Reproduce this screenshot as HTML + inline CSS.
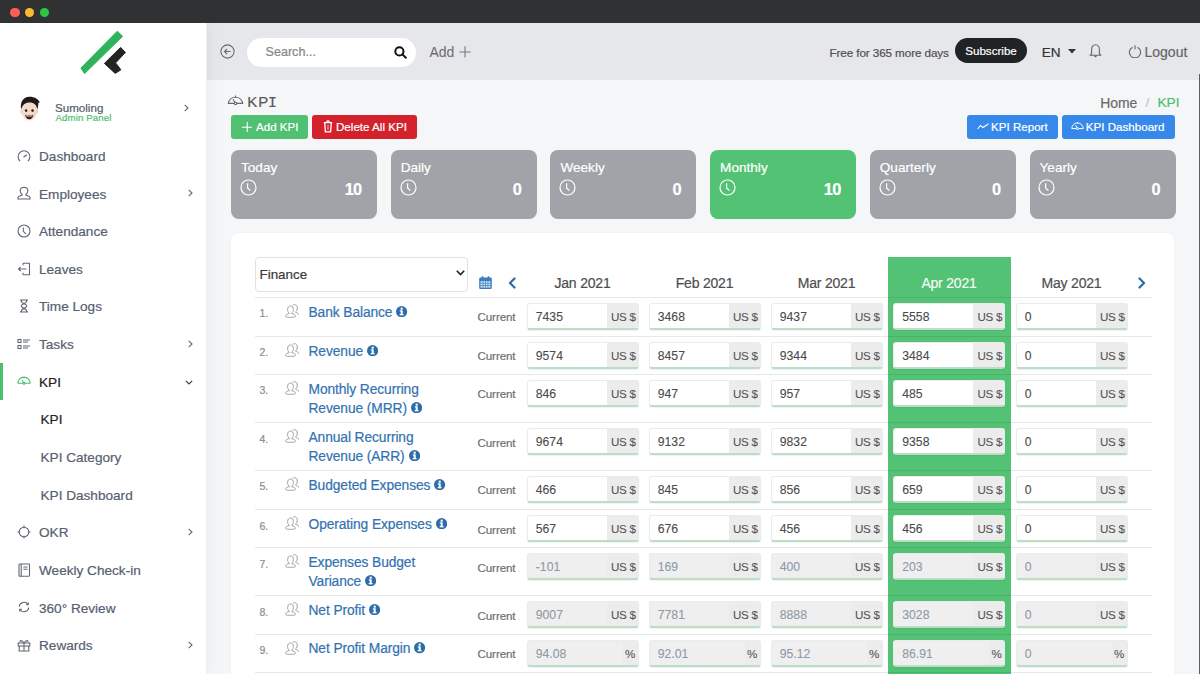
<!DOCTYPE html>
<html><head><meta charset="utf-8">
<style>
*{box-sizing:border-box;margin:0;padding:0}
html,body{width:1200px;height:674px;overflow:hidden;background:#f5f6f8;font-family:"Liberation Sans",sans-serif;position:relative}
body div,body span{-webkit-text-stroke:0.2px currentColor}
.abs{position:absolute}
.ic{position:absolute;display:block}
#titlebar{position:absolute;left:0;top:0;width:1200px;height:23.4px;background:#303133;z-index:5}
.dot{position:absolute;top:7.7px;width:9.6px;height:9.6px;border-radius:50%}
#sidebar{position:absolute;left:0;top:23px;width:207px;height:651px;background:#fff;border-right:1px solid #eceef0;box-shadow:1px 0 14px rgba(40,50,70,.06);z-index:2}
#topbar{position:absolute;left:207px;top:23px;width:993px;height:57.3px;background:#e5e7ea}
.menu{position:absolute;left:39px;margin-top:1.3px;font-size:13.6px;color:#535b69;white-space:nowrap;line-height:16px}
.chev{position:absolute;left:188px}
.num{position:absolute;left:259.5px;font-size:10.5px;color:#8c8c8c;line-height:10px;margin-top:1px}
.kname{position:absolute;left:308.5px;font-size:13.8px;color:#3372b1;line-height:19px;white-space:nowrap;letter-spacing:-0.1px}
.cur{position:absolute;left:477.5px;margin-top:1.2px;font-size:11.6px;color:#6f6f6f;line-height:14px;letter-spacing:-0.1px}
.inp{position:absolute;width:112.4px;height:27.3px;background:#fff;border:1px solid #e9ecea;border-bottom:2px solid #bcdec6;border-radius:3px;box-shadow:0 1px 1px rgba(0,0,0,.06);overflow:hidden}
.inp .val{position:absolute;left:8.3px;top:6px;font-size:12.2px;color:#4a4a4a;line-height:14px;-webkit-text-stroke:0.1px currentColor}
.inp .addon{position:absolute;right:0;top:0;width:31px;height:100%;background:#ececec;font-size:11.6px;color:#555;line-height:14px;padding-top:6.3px;padding-right:2.3px;text-align:right;letter-spacing:-0.3px;-webkit-text-stroke:0.1px currentColor}
.inp .addon.pct{width:15px;padding-right:3px}
.inp.dis{background:#efefef}
.inp.dis .val{color:#8e9aa6}
.hr{position:absolute;left:255px;width:897px;height:1px;background:rgba(20,40,30,.1)}
.card{position:absolute;top:149.5px;width:146px;height:69.2px;border-radius:8px;background:#a0a3a7;color:#fff}
.card .t{position:absolute;left:10px;top:10.8px;font-size:13.6px;line-height:16px}
.card .n{position:absolute;right:15.6px;top:30px;font-size:16.4px;letter-spacing:-0.8px;font-weight:bold;line-height:18px}
.card svg{position:absolute;left:8.9px;top:29.4px}
.mon{position:absolute;top:274.8px;width:112px;text-align:center;font-size:14px;color:#4e4e4e;line-height:16px;letter-spacing:-0.2px}
.btn{position:absolute;top:114.7px;height:24.8px;border-radius:3px;color:#fff;font-size:11.6px;line-height:24.8px;white-space:nowrap}
</style></head><body>
<div id="titlebar">
  <div class="dot" style="left:9.95px;background:#fd5e57"></div>
  <div class="dot" style="left:24.7px;background:#fdbb2f"></div>
  <div class="dot" style="left:39.5px;background:#2bc742"></div>
</div>

<div id="sidebar">
  <!-- logo -->
  <svg class="ic" style="left:70px;top:2px" width="60" height="55" viewBox="0 0 60 55">
    <path d="M47.3 6.2 L52.6 11.3 L14.6 48.6 L10.9 43.1Z" fill="#2fb35a" stroke="#2fb35a" stroke-width="1" stroke-linejoin="round"/>
    <path d="M34.4 38.4 L50.6 22.4 L55.4 27.4 L45.6 37.9 L50.9 44.8 L45.2 48.4Z" fill="#232425" stroke="#232425" stroke-width="1" stroke-linejoin="round"/>
  </svg>
  <!-- avatar -->
  <svg class="ic" style="left:19px;top:73px" width="22" height="26" viewBox="0 0 22 26">
    <ellipse cx="3" cy="15.5" rx="1.6" ry="2.2" fill="#eecbb3"/><ellipse cx="17.6" cy="15.5" rx="1.6" ry="2.2" fill="#eecbb3"/>
    <ellipse cx="10.3" cy="15" rx="7.6" ry="9.4" fill="#f4dac8"/>
    <path d="M2.2 13.5 C0.8 6.5 4 0.8 10.5 0.8 C15.5 0.8 19 3 20.8 6.2 L19.3 7 C19.4 9.5 18.9 11.5 18.3 13.5 C17.5 9 15 6.5 10.5 6.5 C6 6.5 3.5 9 2.2 13.5Z" fill="#1f1a17"/>
    <ellipse cx="7.1" cy="14.6" rx="1.25" ry="1.4" fill="#2a1d1a"/><ellipse cx="13.5" cy="14.6" rx="1.25" ry="1.4" fill="#2a1d1a"/>
    <path d="M6.2 18.8 Q10.3 19.6 14.4 18.8 Q13.8 23.2 10.3 23.2 Q6.8 23.2 6.2 18.8Z" fill="#3a1c18"/><path d="M7 19.3 Q10.3 20 13.6 19.3 L13.4 20.2 Q10.3 20.8 7.2 20.2Z" fill="#fff"/>
  </svg>
  <div class="abs" style="left:55px;top:77.5px;font-size:11.6px;color:#535b69;line-height:14px">Sumoling</div>
  <div class="abs" style="left:55.5px;top:89px;font-size:9.6px;color:#4cbf6e;line-height:11px;letter-spacing:0.15px">Admin Panel</div>
  <svg class="chev" style="left:184px;top:81.3px" width="5" height="8" viewBox="0 0 5 8"><path d="M0.7 0.8 L4 4 L0.7 7.2" stroke="#666" stroke-width="1.1" fill="none"/></svg>

  <div class="menu" style="top:124.7px;color:#566070">Dashboard</div>
<svg class="ic" style="left:16.5px;top:125.7px" width="14" height="14" viewBox="0 0 14 14" fill="none" stroke="#606875" stroke-width="1.1"><path d="M3.2 12.2A5.9 5.9 0 1 1 10.8 12.2"/><path d="M7 7.8L9.3 6.2" stroke-width="1.4" stroke-linecap="round"/></svg>
<div class="menu" style="top:162.3px;color:#566070">Employees</div>
<svg class="ic" style="left:16.5px;top:163.3px" width="14" height="14" viewBox="0 0 14 14" fill="none" stroke="#606875" stroke-width="1.1"><path d="M5 8.3C3.7 7.6 3.2 6.2 3.2 4.8 3.2 2.7 4.8 1.2 7 1.2S10.8 2.7 10.8 4.8C10.8 6.2 10.3 7.6 9 8.3V9.2C11.5 9.7 13 10.5 13 11.8V13H1V11.8C1 10.5 2.5 9.7 5 9.2Z"/></svg>
<svg class="chev" style="top:166.4px" width="5" height="8" viewBox="0 0 5 8"><path d="M0.7 0.8 L4 4 L0.7 7.2" stroke="#666" stroke-width="1.1" fill="none"/></svg>
<div class="menu" style="top:200.0px;color:#566070">Attendance</div>
<svg class="ic" style="left:16.5px;top:201.0px" width="14" height="14" viewBox="0 0 14 14" fill="none" stroke="#606875" stroke-width="1.1"><circle cx="7" cy="7" r="6"/><path d="M6.3 3.5V7.3L9 9.8"/></svg>
<div class="menu" style="top:237.6px;color:#566070">Leaves</div>
<svg class="ic" style="left:16.5px;top:238.6px" width="14" height="14" viewBox="0 0 14 14" fill="none" stroke="#606875" stroke-width="1.1"><path d="M6 1.2H12.5V12.8H6M6 1.2V3.2M6 12.8V10.8M9.5 7H1.5M3.7 4.8L1.5 7L3.7 9.2"/></svg>
<div class="menu" style="top:275.2px;color:#566070">Time Logs</div>
<svg class="ic" style="left:16.5px;top:276.2px" width="14" height="14" viewBox="0 0 14 14" fill="none" stroke="#606875" stroke-width="1.1"><path d="M3 1H11M3 13H11M4 1C4 5 9.8 5 9.8 7S4 9 4 13M10 1C10 5 4.2 5 4.2 7S10 9 10 13"/></svg>
<div class="menu" style="top:312.9px;color:#566070">Tasks</div>
<svg class="ic" style="left:16.5px;top:313.9px" width="14" height="14" viewBox="0 0 14 14" fill="none" stroke="#606875" stroke-width="1.1"><rect x="1" y="2.5" width="3" height="3"/><rect x="1" y="8.5" width="3" height="3"/><path d="M6 3H13M6 5H11M6 9H13M6 11H11"/></svg>
<svg class="chev" style="top:317.0px" width="5" height="8" viewBox="0 0 5 8"><path d="M0.7 0.8 L4 4 L0.7 7.2" stroke="#666" stroke-width="1.1" fill="none"/></svg>
<div class="menu" style="top:350.5px;color:#1f2429">KPI</div>
<svg class="ic" style="left:16.5px;top:351.5px" width="14" height="14" viewBox="0 0 14 14" fill="none" stroke="#4cbf6e" stroke-width="1.1"><path d="M0.9 8.2A6.1 6.1 0 0 1 13.1 8.2Z" stroke-linejoin="round"/><path d="M7 2.3V3.4M6.7 7.7L5.1 5"/><circle cx="7" cy="8.3" r="1" fill="#fff"/></svg>
<svg class="chev" style="left:184.5px;top:356.6px" width="8" height="5" viewBox="0 0 8 5"><path d="M0.8 0.8 L4 4 L7.2 0.8" stroke="#444" stroke-width="1.2" fill="none"/></svg>
<div class="menu" style="left:40.5px;top:388.1px;color:#1f2429">KPI</div>
<div class="menu" style="left:40.5px;top:425.7px;color:#566070">KPI Category</div>
<div class="menu" style="left:40.5px;top:463.4px;color:#566070">KPI Dashboard</div>
<div class="menu" style="top:501.0px;color:#566070">OKR</div>
<svg class="ic" style="left:16.5px;top:502.0px" width="14" height="14" viewBox="0 0 14 14" fill="none" stroke="#606875" stroke-width="1.1"><circle cx="7" cy="7" r="4.8"/><path d="M7 0.5V3.2M7 10.8V13.5M0.5 7H3.2M10.8 7H13.5"/></svg>
<svg class="chev" style="top:505.1px" width="5" height="8" viewBox="0 0 5 8"><path d="M0.7 0.8 L4 4 L0.7 7.2" stroke="#666" stroke-width="1.1" fill="none"/></svg>
<div class="menu" style="top:538.6px;color:#566070">Weekly Check-in</div>
<svg class="ic" style="left:16.5px;top:539.6px" width="14" height="14" viewBox="0 0 14 14" fill="none" stroke="#606875" stroke-width="1.1"><rect x="2" y="1" width="10.5" height="12.2" rx="0.8"/><path d="M4.2 1V13.2M6.3 4H10.5M6.3 6.2H10.5"/></svg>
<div class="menu" style="top:576.3px;color:#566070">360° Review</div>
<svg class="ic" style="left:16.5px;top:577.3px" width="14" height="14" viewBox="0 0 14 14" fill="none" stroke="#606875" stroke-width="1.1"><path d="M2.2 6.5A4.8 4.8 0 0 1 11 4.5M11.8 7.5A4.8 4.8 0 0 1 3 9.5M9.3 4.6H11.3V2.6M4.7 9.4H2.7V11.4"/></svg>
<div class="menu" style="top:613.9px;color:#566070">Rewards</div>
<svg class="ic" style="left:16.5px;top:614.9px" width="14" height="14" viewBox="0 0 14 14" fill="none" stroke="#606875" stroke-width="1.1"><rect x="1.2" y="5" width="11.6" height="3"/><path d="M2.2 8V13H11.8V8M7 5V13M7 5C5 2 2.5 2 3.2 4.2M7 5C9 2 11.5 2 10.8 4.2"/></svg>
<svg class="chev" style="top:618.0px" width="5" height="8" viewBox="0 0 5 8"><path d="M0.7 0.8 L4 4 L0.7 7.2" stroke="#666" stroke-width="1.1" fill="none"/></svg>
<div class="abs" style="left:0;top:340.3px;width:3px;height:36.3px;background:#4cbf6e"></div>
</div>

<div id="topbar">
  <svg class="ic" style="left:12.5px;top:21px" width="15" height="15" viewBox="0 0 15 15" fill="none" stroke="#6a6a6a" stroke-width="1.1"><circle cx="7.5" cy="7.5" r="6.6"/><path d="M10.5 7.5H4.5M7 5L4.5 7.5L7 10"/></svg>
  <div class="abs" style="left:40px;top:15px;width:169px;height:29px;border-radius:15px;background:#fff"></div>
  <div class="abs" style="left:58.5px;top:22px;font-size:12.6px;color:#858585;line-height:15px">Search...</div>
  <svg class="ic" style="left:187px;top:22.8px" width="13" height="13" viewBox="0 0 13 13" fill="none" stroke="#111" stroke-width="2"><circle cx="5.4" cy="5.4" r="4.1"/><path d="M8.4 8.4L11.8 11.8" stroke-linecap="round"/></svg>
  <div class="abs" style="left:222.5px;top:21px;font-size:14px;color:#6e6e6e;line-height:16px;-webkit-text-stroke:0.05px currentColor">Add</div>
  <svg class="ic" style="left:252px;top:22.5px" width="12" height="12" viewBox="0 0 12 12" stroke="#7a7a7a" stroke-width="1.1"><path d="M6 0.3V11.5M0.3 6H11.7"/></svg>

  <div class="abs" style="left:622.5px;top:23px;font-size:11.7px;color:#4f4f4f;line-height:14px;letter-spacing:-0.1px">Free for 365 more days</div>
  <div class="abs" style="left:748px;top:15px;width:72px;height:25px;border-radius:13px;background:#1f2326;color:#fff;font-size:11.6px;line-height:26px;text-align:center">Subscribe</div>
  <div class="abs" style="left:834.8px;top:22.3px;font-size:13.6px;color:#333;line-height:16px">EN</div>
  <svg class="ic" style="left:861.3px;top:25.8px" width="8" height="5" viewBox="0 0 8 5"><path d="M0 0H8L4 4.5Z" fill="#333"/></svg>
  <svg class="ic" style="left:882px;top:20px" width="13" height="15" viewBox="0 0 13 15" fill="none" stroke="#666" stroke-width="1.1"><path d="M2.6 10.6V6.3C2.6 3.9 4.2 1.8 6.5 1.8S10.4 3.9 10.4 6.3V10.6L11.9 12.2H1.1Z" stroke-linejoin="round"/><path d="M5.3 12.6L6.5 13.8 7.7 12.6"/></svg>
  <svg class="ic" style="left:920.6px;top:21px" width="14" height="14" viewBox="0 0 14 14" fill="none" stroke="#666" stroke-width="1.1"><path d="M4.6 3.2A5.6 5.6 0 1 0 9.4 3.2"/><path d="M7 1.2V5.2"/></svg>
  <div class="abs" style="left:937.5px;top:21px;font-size:14px;color:#666;line-height:16px">Logout</div>
</div>

<!-- page header -->
<svg class="ic" style="left:227px;top:94px" width="17" height="12" viewBox="0 0 17 12" fill="none" stroke="#6a6a6a" stroke-width="1.1"><path d="M1.3 9.4A7.3 7.3 0 0 1 15.7 9.4Z" stroke-linejoin="round"/><path d="M8.5 1.6V3.4M8.1 8.6L6 5.2"/><circle cx="8.5" cy="9.4" r="1.2" fill="#f5f6f8"/></svg>
<div class="abs" style="left:247.3px;top:92.8px;font-size:15px;color:#585858;line-height:17px;letter-spacing:0.9px">KP<span style="font-family:'Liberation Mono',monospace;font-size:15px;margin-left:-1.2px">I</span></div>

<div class="btn" style="left:231px;width:77px;background:#50c072"><svg class="ic" style="left:10.5px;top:7px" width="10.5" height="10.5" viewBox="0 0 10.5 10.5" stroke="#fff" stroke-width="1.1"><path d="M5.25 0V10.5M0 5.25H10.5"/></svg><span class="abs" style="left:25px;top:0">Add KPI</span></div>
<div class="btn" style="left:312px;width:105px;background:#d3222c"><svg class="ic" style="left:10.6px;top:5.6px" width="10" height="13" viewBox="0 0 10 13" fill="none" stroke="#fff" stroke-width="1.3" stroke-linejoin="round"><path d="M0.8 2.6H9.2M3.6 2.4L4.3 1H5.7L6.4 2.4M1.7 2.6L2.4 11.9H7.6L8.3 2.6"/><path d="M5 5V10" stroke-width=".7"/></svg><span class="abs" style="left:24px;top:0">Delete All KPI</span></div>

<div class="abs" style="left:1100.3px;top:95px;font-size:13.9px;color:#6a6a6a;line-height:16px">Home</div>
<div class="abs" style="left:1145.5px;top:95px;font-size:13.6px;color:#c6c6c6;line-height:16px">/</div>
<div class="abs" style="left:1157.5px;top:95px;font-size:13.6px;color:#4cbf6e;line-height:16px">KPI</div>

<div class="btn" style="left:967px;width:91px;background:#3788eb"><svg class="ic" style="left:10px;top:8.5px" width="12" height="7" viewBox="0 0 12 7" fill="none" stroke="#fff" stroke-width="1.1"><path d="M0.5 6L3.5 2.5L6 4.5L11.5 0.8"/></svg><span class="abs" style="left:24px;top:0">KPI Report</span></div>
<div class="btn" style="left:1061.8px;width:113.5px;background:#3788eb"><svg class="ic" style="left:9.5px;top:6.8px" width="13" height="9" viewBox="0 0 13 9" fill="none" stroke="#fff" stroke-width="1"><path d="M0.8 7.6A5.7 5.7 0 0 1 12.2 7.6Z" stroke-linejoin="round"/><path d="M6.5 1.6V2.8M6.2 7L4.6 4.2"/><circle cx="6.5" cy="7.6" r="1" fill="#3788eb"/></svg><span class="abs" style="left:24px;top:0">KPI Dashboard</span></div>

<!-- cards -->
<div class="card" style="left:231.0px;background:#a0a3a7"><div class="t">Today</div><svg width="17" height="17" viewBox="0 0 17 17" fill="none" stroke="#fff" stroke-width="1.2"><circle cx="8.5" cy="8.5" r="7.5"/><path d="M7.6 4.2V8.9L10.4 11.6"/></svg><div class="n">10</div></div>
<div class="card" style="left:390.7px;background:#a0a3a7"><div class="t">Daily</div><svg width="17" height="17" viewBox="0 0 17 17" fill="none" stroke="#fff" stroke-width="1.2"><circle cx="8.5" cy="8.5" r="7.5"/><path d="M7.6 4.2V8.9L10.4 11.6"/></svg><div class="n">0</div></div>
<div class="card" style="left:550.4px;background:#a0a3a7"><div class="t">Weekly</div><svg width="17" height="17" viewBox="0 0 17 17" fill="none" stroke="#fff" stroke-width="1.2"><circle cx="8.5" cy="8.5" r="7.5"/><path d="M7.6 4.2V8.9L10.4 11.6"/></svg><div class="n">0</div></div>
<div class="card" style="left:710.1px;background:#53c274"><div class="t">Monthly</div><svg width="17" height="17" viewBox="0 0 17 17" fill="none" stroke="#fff" stroke-width="1.2"><circle cx="8.5" cy="8.5" r="7.5"/><path d="M7.6 4.2V8.9L10.4 11.6"/></svg><div class="n">10</div></div>
<div class="card" style="left:869.8px;background:#a0a3a7"><div class="t">Quarterly</div><svg width="17" height="17" viewBox="0 0 17 17" fill="none" stroke="#fff" stroke-width="1.2"><circle cx="8.5" cy="8.5" r="7.5"/><path d="M7.6 4.2V8.9L10.4 11.6"/></svg><div class="n">0</div></div>
<div class="card" style="left:1029.5px;background:#a0a3a7"><div class="t">Yearly</div><svg width="17" height="17" viewBox="0 0 17 17" fill="none" stroke="#fff" stroke-width="1.2"><circle cx="8.5" cy="8.5" r="7.5"/><path d="M7.6 4.2V8.9L10.4 11.6"/></svg><div class="n">0</div></div>

<!-- table card -->
<div class="abs" style="left:230.5px;top:232.8px;width:943.5px;height:460px;background:#fff;border-radius:8px;box-shadow:0 -1px 2px rgba(0,0,0,.02)"></div>
<div class="abs" style="left:888px;top:256.6px;width:122.5px;height:420px;background:#53c274"></div>
<div class="abs" style="left:255px;top:257px;width:213px;height:35px;border:1px solid #e2e2e2;border-radius:4px;background:#fff"></div>
<div class="abs" style="left:259.5px;top:267px;font-size:13.4px;color:#3a3a3a;line-height:16px">Finance</div>
<svg class="ic" style="left:455.5px;top:270px" width="9" height="6" viewBox="0 0 9 6" fill="none" stroke="#222" stroke-width="1.6"><path d="M0.8 0.8L4.5 4.6L8.2 0.8"/></svg>
<svg class="ic" style="left:479.2px;top:276.3px" width="13" height="13.2" viewBox="0 0 13 13.2"><rect x="0.2" y="1.6" width="12.6" height="11.4" rx="1.2" fill="#3a7dc0"/><path d="M1.6 5.2H11.4V11.6H1.6Z" fill="#dbe8f5"/><path d="M1.6 7.3H11.4M1.6 9.5H11.4M4.05 5.2V11.6M6.5 5.2V11.6M8.95 5.2V11.6" stroke="#3a7dc0" stroke-width=".75"/><rect x="2.6" y="0.2" width="1.8" height="2.6" rx=".6" fill="#3a7dc0"/><rect x="8.6" y="0.2" width="1.8" height="2.6" rx=".6" fill="#3a7dc0"/></svg>
<svg class="ic" style="left:507.5px;top:276.5px" width="8" height="12" viewBox="0 0 8 12" fill="none" stroke="#2f6dab" stroke-width="2.3" stroke-linecap="round" stroke-linejoin="round"><path d="M6.5 1.5L2 6L6.5 10.5"/></svg>
<svg class="ic" style="left:1138px;top:277px" width="8" height="12" viewBox="0 0 8 12" fill="none" stroke="#2f6dab" stroke-width="2.3" stroke-linecap="round" stroke-linejoin="round"><path d="M1.5 1.5L6 6L1.5 10.5"/></svg>
<div class="mon" style="left:526.5px">Jan 2021</div>
<div class="mon" style="left:648.5px">Feb 2021</div>
<div class="mon" style="left:770.5px">Mar 2021</div>
<div class="mon" style="left:893px;color:#f2fbf4">Apr 2021</div>
<div class="mon" style="left:1015.5px">May 2021</div>

<div class="num" style="top:307.3px">1.</div>
<svg class="ic" style="left:285px;top:304.2px" width="14" height="14" viewBox="0 0 14 14" fill="none" stroke="#a0a0a0" stroke-width="1"><path d="M4.3 9.2C2.8 8.3 2.6 6.8 2.6 5.4 2.6 3.4 3.8 2 5.5 2S8.4 3.4 8.4 5.4C8.4 6.8 8.2 8.3 6.7 9.2V9.6C9 10 10.5 11 10.5 12.2 10.5 13 9.5 13.3 5.5 13.3S0.5 13 0.5 12.2C0.5 11 2 10 4.3 9.6Z"/><path d="M7.7 1.7C8.1 1.1 8.7 0.7 9.6 0.7 11.2 0.7 12.3 2 12.3 4 12.3 5.4 12 6.9 10.6 7.8V8.2C12.4 8.6 13.5 9.5 13.5 10.6"/></svg>
<div class="kname" style="top:302.8px">Bank Balance<svg style="display:inline-block;vertical-align:-0.4px;margin-left:4px" width="11.2" height="11.4" viewBox="0 0 11 11.2"><circle cx="5.5" cy="5.6" r="5.5" fill="#2c6cab"/><rect x="4.6" y="4.3" width="2" height="4.4" fill="#fff"/><rect x="3.6" y="7.9" width="3.8" height="1.3" fill="#fff"/><rect x="3.7" y="4.3" width="2" height="1.1" fill="#fff"/><circle cx="5.6" cy="2.6" r="1.15" fill="#fff"/></svg></div>
<div class="cur" style="top:309.3px">Current</div>
<div class="inp" style="left:526.5px;top:303.0px"><span class="val">7435</span><span class="addon">US $</span></div>
<div class="inp" style="left:648.5px;top:303.0px"><span class="val">3468</span><span class="addon">US $</span></div>
<div class="inp" style="left:770.5px;top:303.0px"><span class="val">9437</span><span class="addon">US $</span></div>
<div class="inp" style="left:893px;top:303.0px"><span class="val">5558</span><span class="addon">US $</span></div>
<div class="inp" style="left:1015.5px;top:303.0px"><span class="val">0</span><span class="addon">US $</span></div>
<div class="num" style="top:346px">2.</div>
<svg class="ic" style="left:285px;top:342.9px" width="14" height="14" viewBox="0 0 14 14" fill="none" stroke="#a0a0a0" stroke-width="1"><path d="M4.3 9.2C2.8 8.3 2.6 6.8 2.6 5.4 2.6 3.4 3.8 2 5.5 2S8.4 3.4 8.4 5.4C8.4 6.8 8.2 8.3 6.7 9.2V9.6C9 10 10.5 11 10.5 12.2 10.5 13 9.5 13.3 5.5 13.3S0.5 13 0.5 12.2C0.5 11 2 10 4.3 9.6Z"/><path d="M7.7 1.7C8.1 1.1 8.7 0.7 9.6 0.7 11.2 0.7 12.3 2 12.3 4 12.3 5.4 12 6.9 10.6 7.8V8.2C12.4 8.6 13.5 9.5 13.5 10.6"/></svg>
<div class="kname" style="top:341.5px">Revenue<svg style="display:inline-block;vertical-align:-0.4px;margin-left:4px" width="11.2" height="11.4" viewBox="0 0 11 11.2"><circle cx="5.5" cy="5.6" r="5.5" fill="#2c6cab"/><rect x="4.6" y="4.3" width="2" height="4.4" fill="#fff"/><rect x="3.6" y="7.9" width="3.8" height="1.3" fill="#fff"/><rect x="3.7" y="4.3" width="2" height="1.1" fill="#fff"/><circle cx="5.6" cy="2.6" r="1.15" fill="#fff"/></svg></div>
<div class="cur" style="top:348px">Current</div>
<div class="inp" style="left:526.5px;top:341.7px"><span class="val">9574</span><span class="addon">US $</span></div>
<div class="inp" style="left:648.5px;top:341.7px"><span class="val">8457</span><span class="addon">US $</span></div>
<div class="inp" style="left:770.5px;top:341.7px"><span class="val">9344</span><span class="addon">US $</span></div>
<div class="inp" style="left:893px;top:341.7px"><span class="val">3484</span><span class="addon">US $</span></div>
<div class="inp" style="left:1015.5px;top:341.7px"><span class="val">0</span><span class="addon">US $</span></div>
<div class="num" style="top:384.2px">3.</div>
<svg class="ic" style="left:285px;top:381.09999999999997px" width="14" height="14" viewBox="0 0 14 14" fill="none" stroke="#a0a0a0" stroke-width="1"><path d="M4.3 9.2C2.8 8.3 2.6 6.8 2.6 5.4 2.6 3.4 3.8 2 5.5 2S8.4 3.4 8.4 5.4C8.4 6.8 8.2 8.3 6.7 9.2V9.6C9 10 10.5 11 10.5 12.2 10.5 13 9.5 13.3 5.5 13.3S0.5 13 0.5 12.2C0.5 11 2 10 4.3 9.6Z"/><path d="M7.7 1.7C8.1 1.1 8.7 0.7 9.6 0.7 11.2 0.7 12.3 2 12.3 4 12.3 5.4 12 6.9 10.6 7.8V8.2C12.4 8.6 13.5 9.5 13.5 10.6"/></svg>
<div class="kname" style="top:379.7px">Monthly Recurring</div>
<div class="kname" style="top:398.7px">Revenue (MRR)<svg style="display:inline-block;vertical-align:-0.4px;margin-left:4px" width="11.2" height="11.4" viewBox="0 0 11 11.2"><circle cx="5.5" cy="5.6" r="5.5" fill="#2c6cab"/><rect x="4.6" y="4.3" width="2" height="4.4" fill="#fff"/><rect x="3.6" y="7.9" width="3.8" height="1.3" fill="#fff"/><rect x="3.7" y="4.3" width="2" height="1.1" fill="#fff"/><circle cx="5.6" cy="2.6" r="1.15" fill="#fff"/></svg></div>
<div class="cur" style="top:386.2px">Current</div>
<div class="inp" style="left:526.5px;top:379.9px"><span class="val">846</span><span class="addon">US $</span></div>
<div class="inp" style="left:648.5px;top:379.9px"><span class="val">947</span><span class="addon">US $</span></div>
<div class="inp" style="left:770.5px;top:379.9px"><span class="val">957</span><span class="addon">US $</span></div>
<div class="inp" style="left:893px;top:379.9px"><span class="val">485</span><span class="addon">US $</span></div>
<div class="inp" style="left:1015.5px;top:379.9px"><span class="val">0</span><span class="addon">US $</span></div>
<div class="num" style="top:432.5px">4.</div>
<svg class="ic" style="left:285px;top:429.4px" width="14" height="14" viewBox="0 0 14 14" fill="none" stroke="#a0a0a0" stroke-width="1"><path d="M4.3 9.2C2.8 8.3 2.6 6.8 2.6 5.4 2.6 3.4 3.8 2 5.5 2S8.4 3.4 8.4 5.4C8.4 6.8 8.2 8.3 6.7 9.2V9.6C9 10 10.5 11 10.5 12.2 10.5 13 9.5 13.3 5.5 13.3S0.5 13 0.5 12.2C0.5 11 2 10 4.3 9.6Z"/><path d="M7.7 1.7C8.1 1.1 8.7 0.7 9.6 0.7 11.2 0.7 12.3 2 12.3 4 12.3 5.4 12 6.9 10.6 7.8V8.2C12.4 8.6 13.5 9.5 13.5 10.6"/></svg>
<div class="kname" style="top:428.0px">Annual Recurring</div>
<div class="kname" style="top:447.0px">Revenue (ARR)<svg style="display:inline-block;vertical-align:-0.4px;margin-left:4px" width="11.2" height="11.4" viewBox="0 0 11 11.2"><circle cx="5.5" cy="5.6" r="5.5" fill="#2c6cab"/><rect x="4.6" y="4.3" width="2" height="4.4" fill="#fff"/><rect x="3.6" y="7.9" width="3.8" height="1.3" fill="#fff"/><rect x="3.7" y="4.3" width="2" height="1.1" fill="#fff"/><circle cx="5.6" cy="2.6" r="1.15" fill="#fff"/></svg></div>
<div class="cur" style="top:434.5px">Current</div>
<div class="inp" style="left:526.5px;top:428.2px"><span class="val">9674</span><span class="addon">US $</span></div>
<div class="inp" style="left:648.5px;top:428.2px"><span class="val">9132</span><span class="addon">US $</span></div>
<div class="inp" style="left:770.5px;top:428.2px"><span class="val">9832</span><span class="addon">US $</span></div>
<div class="inp" style="left:893px;top:428.2px"><span class="val">9358</span><span class="addon">US $</span></div>
<div class="inp" style="left:1015.5px;top:428.2px"><span class="val">0</span><span class="addon">US $</span></div>
<div class="num" style="top:480.3px">5.</div>
<svg class="ic" style="left:285px;top:477.2px" width="14" height="14" viewBox="0 0 14 14" fill="none" stroke="#a0a0a0" stroke-width="1"><path d="M4.3 9.2C2.8 8.3 2.6 6.8 2.6 5.4 2.6 3.4 3.8 2 5.5 2S8.4 3.4 8.4 5.4C8.4 6.8 8.2 8.3 6.7 9.2V9.6C9 10 10.5 11 10.5 12.2 10.5 13 9.5 13.3 5.5 13.3S0.5 13 0.5 12.2C0.5 11 2 10 4.3 9.6Z"/><path d="M7.7 1.7C8.1 1.1 8.7 0.7 9.6 0.7 11.2 0.7 12.3 2 12.3 4 12.3 5.4 12 6.9 10.6 7.8V8.2C12.4 8.6 13.5 9.5 13.5 10.6"/></svg>
<div class="kname" style="top:475.8px">Budgeted Expenses<svg style="display:inline-block;vertical-align:-0.4px;margin-left:4px" width="11.2" height="11.4" viewBox="0 0 11 11.2"><circle cx="5.5" cy="5.6" r="5.5" fill="#2c6cab"/><rect x="4.6" y="4.3" width="2" height="4.4" fill="#fff"/><rect x="3.6" y="7.9" width="3.8" height="1.3" fill="#fff"/><rect x="3.7" y="4.3" width="2" height="1.1" fill="#fff"/><circle cx="5.6" cy="2.6" r="1.15" fill="#fff"/></svg></div>
<div class="cur" style="top:482.3px">Current</div>
<div class="inp" style="left:526.5px;top:476.0px"><span class="val">466</span><span class="addon">US $</span></div>
<div class="inp" style="left:648.5px;top:476.0px"><span class="val">845</span><span class="addon">US $</span></div>
<div class="inp" style="left:770.5px;top:476.0px"><span class="val">856</span><span class="addon">US $</span></div>
<div class="inp" style="left:893px;top:476.0px"><span class="val">659</span><span class="addon">US $</span></div>
<div class="inp" style="left:1015.5px;top:476.0px"><span class="val">0</span><span class="addon">US $</span></div>
<div class="num" style="top:519.5px">6.</div>
<svg class="ic" style="left:285px;top:516.4px" width="14" height="14" viewBox="0 0 14 14" fill="none" stroke="#a0a0a0" stroke-width="1"><path d="M4.3 9.2C2.8 8.3 2.6 6.8 2.6 5.4 2.6 3.4 3.8 2 5.5 2S8.4 3.4 8.4 5.4C8.4 6.8 8.2 8.3 6.7 9.2V9.6C9 10 10.5 11 10.5 12.2 10.5 13 9.5 13.3 5.5 13.3S0.5 13 0.5 12.2C0.5 11 2 10 4.3 9.6Z"/><path d="M7.7 1.7C8.1 1.1 8.7 0.7 9.6 0.7 11.2 0.7 12.3 2 12.3 4 12.3 5.4 12 6.9 10.6 7.8V8.2C12.4 8.6 13.5 9.5 13.5 10.6"/></svg>
<div class="kname" style="top:515.0px">Operating Expenses<svg style="display:inline-block;vertical-align:-0.4px;margin-left:4px" width="11.2" height="11.4" viewBox="0 0 11 11.2"><circle cx="5.5" cy="5.6" r="5.5" fill="#2c6cab"/><rect x="4.6" y="4.3" width="2" height="4.4" fill="#fff"/><rect x="3.6" y="7.9" width="3.8" height="1.3" fill="#fff"/><rect x="3.7" y="4.3" width="2" height="1.1" fill="#fff"/><circle cx="5.6" cy="2.6" r="1.15" fill="#fff"/></svg></div>
<div class="cur" style="top:521.5px">Current</div>
<div class="inp" style="left:526.5px;top:515.2px"><span class="val">567</span><span class="addon">US $</span></div>
<div class="inp" style="left:648.5px;top:515.2px"><span class="val">676</span><span class="addon">US $</span></div>
<div class="inp" style="left:770.5px;top:515.2px"><span class="val">456</span><span class="addon">US $</span></div>
<div class="inp" style="left:893px;top:515.2px"><span class="val">456</span><span class="addon">US $</span></div>
<div class="inp" style="left:1015.5px;top:515.2px"><span class="val">0</span><span class="addon">US $</span></div>
<div class="num" style="top:557.5px">7.</div>
<svg class="ic" style="left:285px;top:554.4px" width="14" height="14" viewBox="0 0 14 14" fill="none" stroke="#a0a0a0" stroke-width="1"><path d="M4.3 9.2C2.8 8.3 2.6 6.8 2.6 5.4 2.6 3.4 3.8 2 5.5 2S8.4 3.4 8.4 5.4C8.4 6.8 8.2 8.3 6.7 9.2V9.6C9 10 10.5 11 10.5 12.2 10.5 13 9.5 13.3 5.5 13.3S0.5 13 0.5 12.2C0.5 11 2 10 4.3 9.6Z"/><path d="M7.7 1.7C8.1 1.1 8.7 0.7 9.6 0.7 11.2 0.7 12.3 2 12.3 4 12.3 5.4 12 6.9 10.6 7.8V8.2C12.4 8.6 13.5 9.5 13.5 10.6"/></svg>
<div class="kname" style="top:553.0px">Expenses Budget</div>
<div class="kname" style="top:572.0px">Variance<svg style="display:inline-block;vertical-align:-0.4px;margin-left:4px" width="11.2" height="11.4" viewBox="0 0 11 11.2"><circle cx="5.5" cy="5.6" r="5.5" fill="#2c6cab"/><rect x="4.6" y="4.3" width="2" height="4.4" fill="#fff"/><rect x="3.6" y="7.9" width="3.8" height="1.3" fill="#fff"/><rect x="3.7" y="4.3" width="2" height="1.1" fill="#fff"/><circle cx="5.6" cy="2.6" r="1.15" fill="#fff"/></svg></div>
<div class="cur" style="top:559.5px">Current</div>
<div class="inp dis" style="left:526.5px;top:553.2px"><span class="val">-101</span><span class="addon">US $</span></div>
<div class="inp dis" style="left:648.5px;top:553.2px"><span class="val">169</span><span class="addon">US $</span></div>
<div class="inp dis" style="left:770.5px;top:553.2px"><span class="val">400</span><span class="addon">US $</span></div>
<div class="inp dis" style="left:893px;top:553.2px"><span class="val">203</span><span class="addon">US $</span></div>
<div class="inp dis" style="left:1015.5px;top:553.2px"><span class="val">0</span><span class="addon">US $</span></div>
<div class="num" style="top:605.5px">8.</div>
<svg class="ic" style="left:285px;top:602.4px" width="14" height="14" viewBox="0 0 14 14" fill="none" stroke="#a0a0a0" stroke-width="1"><path d="M4.3 9.2C2.8 8.3 2.6 6.8 2.6 5.4 2.6 3.4 3.8 2 5.5 2S8.4 3.4 8.4 5.4C8.4 6.8 8.2 8.3 6.7 9.2V9.6C9 10 10.5 11 10.5 12.2 10.5 13 9.5 13.3 5.5 13.3S0.5 13 0.5 12.2C0.5 11 2 10 4.3 9.6Z"/><path d="M7.7 1.7C8.1 1.1 8.7 0.7 9.6 0.7 11.2 0.7 12.3 2 12.3 4 12.3 5.4 12 6.9 10.6 7.8V8.2C12.4 8.6 13.5 9.5 13.5 10.6"/></svg>
<div class="kname" style="top:601.0px">Net Profit<svg style="display:inline-block;vertical-align:-0.4px;margin-left:4px" width="11.2" height="11.4" viewBox="0 0 11 11.2"><circle cx="5.5" cy="5.6" r="5.5" fill="#2c6cab"/><rect x="4.6" y="4.3" width="2" height="4.4" fill="#fff"/><rect x="3.6" y="7.9" width="3.8" height="1.3" fill="#fff"/><rect x="3.7" y="4.3" width="2" height="1.1" fill="#fff"/><circle cx="5.6" cy="2.6" r="1.15" fill="#fff"/></svg></div>
<div class="cur" style="top:607.5px">Current</div>
<div class="inp dis" style="left:526.5px;top:601.2px"><span class="val">9007</span><span class="addon">US $</span></div>
<div class="inp dis" style="left:648.5px;top:601.2px"><span class="val">7781</span><span class="addon">US $</span></div>
<div class="inp dis" style="left:770.5px;top:601.2px"><span class="val">8888</span><span class="addon">US $</span></div>
<div class="inp dis" style="left:893px;top:601.2px"><span class="val">3028</span><span class="addon">US $</span></div>
<div class="inp dis" style="left:1015.5px;top:601.2px"><span class="val">0</span><span class="addon">US $</span></div>
<div class="num" style="top:643.8px">9.</div>
<svg class="ic" style="left:285px;top:640.6999999999999px" width="14" height="14" viewBox="0 0 14 14" fill="none" stroke="#a0a0a0" stroke-width="1"><path d="M4.3 9.2C2.8 8.3 2.6 6.8 2.6 5.4 2.6 3.4 3.8 2 5.5 2S8.4 3.4 8.4 5.4C8.4 6.8 8.2 8.3 6.7 9.2V9.6C9 10 10.5 11 10.5 12.2 10.5 13 9.5 13.3 5.5 13.3S0.5 13 0.5 12.2C0.5 11 2 10 4.3 9.6Z"/><path d="M7.7 1.7C8.1 1.1 8.7 0.7 9.6 0.7 11.2 0.7 12.3 2 12.3 4 12.3 5.4 12 6.9 10.6 7.8V8.2C12.4 8.6 13.5 9.5 13.5 10.6"/></svg>
<div class="kname" style="top:639.3px">Net Profit Margin<svg style="display:inline-block;vertical-align:-0.4px;margin-left:4px" width="11.2" height="11.4" viewBox="0 0 11 11.2"><circle cx="5.5" cy="5.6" r="5.5" fill="#2c6cab"/><rect x="4.6" y="4.3" width="2" height="4.4" fill="#fff"/><rect x="3.6" y="7.9" width="3.8" height="1.3" fill="#fff"/><rect x="3.7" y="4.3" width="2" height="1.1" fill="#fff"/><circle cx="5.6" cy="2.6" r="1.15" fill="#fff"/></svg></div>
<div class="cur" style="top:645.8px">Current</div>
<div class="inp dis" style="left:526.5px;top:639.5px"><span class="val">94.08</span><span class="addon pct">%</span></div>
<div class="inp dis" style="left:648.5px;top:639.5px"><span class="val">92.01</span><span class="addon pct">%</span></div>
<div class="inp dis" style="left:770.5px;top:639.5px"><span class="val">95.12</span><span class="addon pct">%</span></div>
<div class="inp dis" style="left:893px;top:639.5px"><span class="val">86.91</span><span class="addon pct">%</span></div>
<div class="inp dis" style="left:1015.5px;top:639.5px"><span class="val">0</span><span class="addon pct">%</span></div>
<div class="hr" style="top:297px"></div>
<div class="hr" style="top:336px"></div>
<div class="hr" style="top:374px"></div>
<div class="hr" style="top:422px"></div>
<div class="hr" style="top:470px"></div>
<div class="hr" style="top:509px"></div>
<div class="hr" style="top:547px"></div>
<div class="hr" style="top:595px"></div>
<div class="hr" style="top:634px"></div>
<div class="hr" style="top:672px"></div>

<div class="abs" style="left:1198.7px;top:74px;width:1.3px;height:600px;background:#5e5e5e"></div>
</body></html>
